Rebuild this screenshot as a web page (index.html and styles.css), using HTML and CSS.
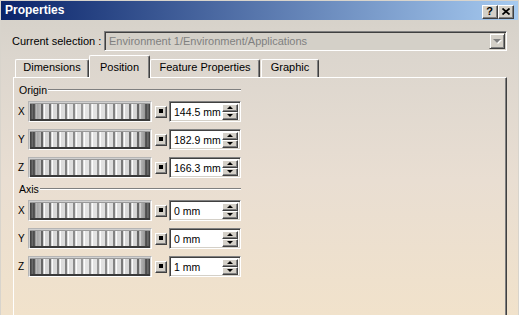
FILE: index.html
```html
<!DOCTYPE html>
<html>
<head>
<meta charset="utf-8">
<link rel="stylesheet" href="styles.css">
</head>
<body>
<div class="window">
  <div class="titlebar">
    <span class="title">Properties</span>
    <span class="tbtn help">?</span>
    <span class="tbtn close"><svg width="8" height="7" viewBox="0 0 8 7"><path d="M0.5 0.5L7.5 6.5M7.5 0.5L0.5 6.5" stroke="#000" stroke-width="1.7"/></svg></span>
  </div>
  <div class="client">
    <div class="selrow">
      <span class="sellabel">Current selection :</span>
      <div class="combo">
        <span class="combo-text">Environment 1/Environment/Applications</span>
        <span class="combo-btn"><i class="tri-down dis"></i></span>
      </div>
    </div>
    <div class="tabs">
      <div class="tab t-dim">Dimensions</div>
      <div class="tab active t-pos">Position</div>
      <div class="tab t-feat">Feature Properties</div>
      <div class="tab t-gra">Graphic</div>
    </div>
    <div class="panel">
      <div class="group">
        <div class="ghead"><span class="gtitle">Origin</span><i class="gline"></i></div>
        <div class="rows">
          <div class="row"><span class="axl">X</span><div class="wheel"><i></i></div><span class="sq"><i></i></span><div class="edit"><span class="val">144.5 mm</span><span class="spin"><b class="sb"><i class="tri-up"></i></b><b class="sb"><i class="tri-down"></i></b></span></div></div>
          <div class="row"><span class="axl">Y</span><div class="wheel"><i></i></div><span class="sq"><i></i></span><div class="edit"><span class="val">182.9 mm</span><span class="spin"><b class="sb"><i class="tri-up"></i></b><b class="sb"><i class="tri-down"></i></b></span></div></div>
          <div class="row"><span class="axl">Z</span><div class="wheel"><i></i></div><span class="sq"><i></i></span><div class="edit"><span class="val">166.3 mm</span><span class="spin"><b class="sb"><i class="tri-up"></i></b><b class="sb"><i class="tri-down"></i></b></span></div></div>
        </div>
      </div>
      <div class="group g2">
        <div class="ghead"><span class="gtitle">Axis</span><i class="gline"></i></div>
        <div class="rows">
          <div class="row"><span class="axl">X</span><div class="wheel"><i></i></div><span class="sq"><i></i></span><div class="edit"><span class="val">0 mm</span><span class="spin"><b class="sb"><i class="tri-up"></i></b><b class="sb"><i class="tri-down"></i></b></span></div></div>
          <div class="row"><span class="axl">Y</span><div class="wheel"><i></i></div><span class="sq"><i></i></span><div class="edit"><span class="val">0 mm</span><span class="spin"><b class="sb"><i class="tri-up"></i></b><b class="sb"><i class="tri-down"></i></b></span></div></div>
          <div class="row"><span class="axl">Z</span><div class="wheel"><i></i></div><span class="sq"><i></i></span><div class="edit"><span class="val">1 mm</span><span class="spin"><b class="sb"><i class="tri-up"></i></b><b class="sb"><i class="tri-down"></i></b></span></div></div>
        </div>
      </div>
    </div>
  </div>
</div>
</body>
</html>
```
FILE: styles.css
```css
html, body {
  margin: 0;
  padding: 0;
}
body {
  width: 519px;
  height: 315px;
  overflow: hidden;
  font-family: "Liberation Sans", Arial, sans-serif;
  font-size: 11px;
  color: #000;
}
.window {
  box-sizing: border-box;
  width: 519px;
  height: 315px;
  display: flex;
  flex-direction: column;
  overflow: hidden;
  border-top: 1px solid #d8d4cc;
  border-left: 1px solid #d8d4cc;
  border-right: 1px solid #d8d4cc;
  background: linear-gradient(to bottom, #d4d0c8 0px, #dcd6ce 60px, #e9ded2 180px, #f1e2cb 315px) fixed;
}
.titlebar {
  flex: none;
  height: 19px;
  display: flex;
  align-items: center;
  padding: 0 4px 0 4px;
  background: linear-gradient(to right, #0a246a, #a6caf0);
}
.title {
  flex: 1;
  color: #fff;
  font-weight: bold;
  font-size: 12px;
  line-height: 19px;
}
.tbtn {
  box-sizing: border-box;
  width: 16px;
  height: 14px;
  margin-top: 2px;
  display: flex;
  align-items: center;
  justify-content: center;
  background: #d4d0c8;
  border: 1px solid;
  border-color: #fff #404040 #404040 #fff;
  box-shadow: inset -1px -1px #808080;
  font-weight: bold;
  font-size: 11px;
  line-height: 11px;
}
.tbtn.help { padding-right: 1px; }
.tbtn.close svg { display: block; margin-top: -1px; }

.client {
  flex: 1;
  display: flex;
  flex-direction: column;
  padding: 11px 11px 0 11px;
  min-height: 0;
}
.selrow {
  display: flex;
  align-items: center;
  height: 20px;
}
.sellabel {
  flex: 0 0 92px;
  white-space: nowrap;
}
.combo {
  flex: 1;
  box-sizing: border-box;
  height: 20px;
  display: flex;
  align-items: center;
  background: #d4d0c8;
  border: 1px solid;
  border-color: #808080 #fff #fff #808080;
  box-shadow: inset 1px 1px #404040, inset -1px -1px #d4d0c8;
  padding: 1px;
}
.combo-text {
  flex: 1;
  color: #808080;
  padding-left: 3px;
  white-space: nowrap;
  overflow: hidden;
}
.combo-btn {
  box-sizing: border-box;
  width: 16px;
  height: 16px;
  display: flex;
  align-items: center;
  justify-content: center;
  background: #d4d0c8;
  border: 1px solid;
  border-color: #d4d0c8 #404040 #404040 #d4d0c8;
  box-shadow: inset 1px 1px #fff, inset -1px -1px #808080;
}
.tri-down, .tri-up {
  display: block;
  width: 0;
  height: 0;
  border-left: 3px solid transparent;
  border-right: 3px solid transparent;
}
.tri-down { border-top: 3px solid #000; }
.tri-up { border-bottom: 3px solid #000; }
.tri-down.dis {
  border-left-width: 4px;
  border-right-width: 4px;
  border-top: 4px solid #808080;
  filter: drop-shadow(1px 1px 0 #fff);
}

.tabs {
  flex: none;
  display: flex;
  align-items: flex-end;
  height: 22px;
  margin-top: 4px;
  padding-left: 3px;
}
.tab {
  box-sizing: border-box;
  height: 18px;
  padding: 1px 0 3px 0;
  line-height: 13px;
  text-align: center;
  white-space: nowrap;
  border-top: 1px solid #fff;
  border-left: 1px solid #fff;
  border-right: 1px solid #404040;
  border-radius: 2px 2px 0 0;
  box-shadow: inset -1px 0 #808080;
}
.tab.active {
  position: relative;
  z-index: 2;
  height: 23px;
  margin-bottom: -1px;
  padding-top: 5px;
  padding-bottom: 4px;
  background: linear-gradient(to bottom, #d4d0c8 0px, #dcd6ce 60px, #e9ded2 180px, #f1e2cb 315px) fixed;
}
.t-dim { width: 74px; }
.t-pos { width: 61px; }
.t-feat { width: 110px; }
.t-gra { width: 58px; margin-left: 1px; }

.panel {
  flex: none;
  height: 260px;
  margin-left: 1px;
  box-sizing: border-box;
  border-top: 1px solid #fff;
  border-left: 1px solid #fff;
  border-right: 1px solid #404040;
  box-shadow: inset -1px 0 #808080;
  padding: 5px 0 0 4px;
}
.group {
  width: 223px;
}
.g2 { margin-top: 4px; }
.ghead {
  display: flex;
  align-items: center;
  height: 14px;
}
.gtitle {
  padding-left: 1px;
  font-size: 10.5px;
}
.gline {
  flex: 1;
  height: 0;
  border-top: 1px solid #808080;
  border-bottom: 1px solid #fff;
  margin-left: 1px;
}
.rows {
  display: flex;
  flex-direction: column;
  gap: 7px;
  margin-top: 4px;
}
.row {
  display: flex;
  align-items: center;
  height: 21px;
}
.axl {
  flex: 0 0 10px;
  font-size: 10px;
}
.wheel {
  box-sizing: border-box;
  width: 124px;
  height: 21px;
  border: 1px solid;
  border-color: #b4b4b4 #fff #fff #b4b4b4;
  background: #d0d0d0;
  padding: 1px 1px 0 1px;
}
.wheel i {
  display: block;
  box-sizing: border-box;
  height: 100%;
  border-top: 1px solid #9a9a9a;
  border-bottom: 2px solid #3a3a3a;
  background:
    linear-gradient(to right, rgba(40,40,40,0.9) 0, rgba(70,70,70,0.45) 4%, rgba(90,90,90,0) 12%, rgba(255,255,255,0.35) 50%, rgba(90,90,90,0) 88%, rgba(70,70,70,0.45) 96%, rgba(40,40,40,0.9) 100%),
    repeating-linear-gradient(to right, #d6d6d6 0 3px, #6a6a6a 3px 5px, #d6d6d6 5px 6px, #fcfcfc 6px 7px, #d6d6d6 7px 8px);
}
.sq {
  box-sizing: border-box;
  width: 12px;
  height: 12px;
  margin-left: 3px;
  display: flex;
  align-items: center;
  justify-content: center;
  background: #d4d0c8;
  border: 1px solid;
  border-color: #fff #404040 #404040 #fff;
  box-shadow: inset -1px -1px #808080;
}
.sq i {
  display: block;
  width: 4px;
  height: 4px;
  background: #000;
  margin: 0 1px 1px 0;
}
.edit {
  box-sizing: border-box;
  width: 72px;
  height: 21px;
  margin-left: 2px;
  display: flex;
  align-items: center;
  background: #fff;
  border: 1px solid;
  border-color: #808080 #fff #fff #808080;
  box-shadow: inset 1px 1px #404040, inset -1px -1px #d4d0c8;
  padding: 1px 1px 1px 1px;
}
.val {
  flex: 1;
  padding-left: 3px;
  font-size: 10.5px;
  white-space: nowrap;
}
.spin {
  display: flex;
  flex-direction: column;
  width: 16px;
  margin-right: 1px;
}
.sb {
  box-sizing: border-box;
  height: 8px;
  display: flex;
  align-items: center;
  justify-content: center;
  background: #d4d0c8;
  border: 1px solid;
  border-color: #fff #404040 #404040 #fff;
  box-shadow: inset -1px -1px #808080;
}
```
